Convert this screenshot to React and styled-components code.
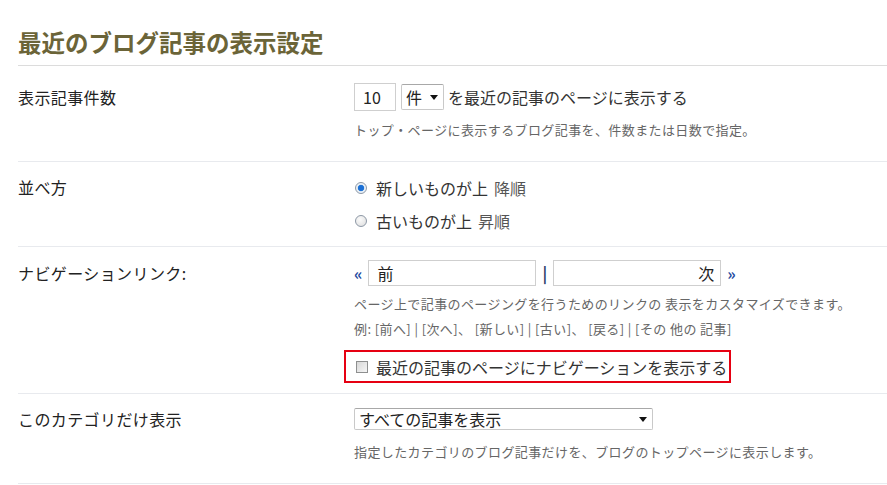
import styled, { createGlobalStyle } from 'styled-components'

const GlobalStyle = createGlobalStyle`
  html, body {
    margin: 0;
    padding: 0;
    background: #fff;
  }
  body {
    font-family: 'Noto Sans CJK JP', 'Noto Sans', sans-serif;
    color: #333;
  }
`

const Page = styled.div`
  padding: 27px 0 0 18px;
  width: 869px;
`

const Title = styled.h2`
  margin: 0;
  padding-bottom: 8px;
  font-size: 23.5px;
  line-height: 30px;
  font-weight: bold;
  color: #6b6438;
  border-bottom: 1px solid #dcdcdc;
`

const Row = styled.div`
  display: flex;
  padding: ${(p) => p.$pad};
  border-bottom: 1px solid #e8eaee;
`

const Label = styled.div`
  flex: 0 0 336px;
  font-size: 16px;
  line-height: ${(p) => p.$lh}px;
  color: #222;
  letter-spacing: 0.4px;
`

const Field = styled.div`
  flex: 1;
  display: flex;
  flex-direction: column;
  align-items: flex-start;
`

const Line = styled.div`
  display: flex;
  align-items: center;
  height: ${(p) => p.$h}px;
  margin-top: ${(p) => p.$mt || 0}px;
  font-size: 16px;
  color: #333;
`

const Hint = styled.div`
  font-size: 13px;
  letter-spacing: 0.4px;
  line-height: ${(p) => p.$lh || 20}px;
  margin-top: ${(p) => p.$mt || 0}px;
  color: #666;
  white-space: nowrap;
`

const TextBox = styled.div`
  box-sizing: border-box;
  width: ${(p) => p.$w}px;
  height: ${(p) => p.$h}px;
  border: 1px solid #cfcfcf;
  padding: 0 ${(p) => (p.$right ? 6 : 8)}px;
  display: flex;
  align-items: center;
  justify-content: ${(p) => (p.$right ? 'flex-end' : 'flex-start')};
  font-size: 16px;
  color: #222;
  background: #fff;
`

const Select = styled.div`
  position: relative;
  box-sizing: border-box;
  width: ${(p) => p.$w}px;
  height: ${(p) => p.$h}px;
  margin-left: ${(p) => p.$ml || 0}px;
  border: 1px solid #c9c9c9;
  border-top-color: #a8a8a8;
  border-radius: 2px;
  padding-left: 4px;
  display: flex;
  align-items: center;
  font-size: 16px;
  color: #222;
  background: #fff;
  &::after {
    content: '';
    position: absolute;
    right: 5px;
    top: 50%;
    margin-top: -2px;
    border-left: 4px solid transparent;
    border-right: 4px solid transparent;
    border-top: 5px solid #111;
  }
`

const After = styled.span`
  margin-left: 4px;
`

const Radio = styled.span`
  box-sizing: border-box;
  width: 12px;
  height: 12px;
  margin: 0 9px 0 1px;
  border-radius: 50%;
  border: 1px solid #8d98a6;
  background: ${(p) =>
    p.$checked
      ? 'radial-gradient(circle, #1a6fd6 0 2.5px, #3d89d9 3px, #e6eef6 3.6px, #f4f6f8 100%)'
      : 'radial-gradient(circle at 40% 35%, #fbfbfb 0, #dcdcdc 100%)'};
`

const Muted = styled.span`
  color: #555;
  margin-left: 6px;
`

const Guillemet = styled.span`
  color: #1f4ba0;
  font-weight: bold;
  font-size: 16px;
  margin: ${(p) => p.$m};
`

const Pipe = styled.span`
  color: #2a3a6a;
  font-weight: bold;
  margin: 0 6px 0 6px;
`

const HighlightBox = styled.div`
  box-sizing: border-box;
  width: 387px;
  height: 33px;
  margin: 9px 0 0 -10px;
  border: 2px solid #e60012;
  display: flex;
  align-items: center;
  padding-left: 10px;
  font-size: 16px;
  color: #333;
`

const Check = styled.span`
  box-sizing: border-box;
  width: 12px;
  height: 12px;
  margin-right: 8px;
  border: 1px solid #8e8f8f;
  background: linear-gradient(135deg, #d7d7d7 0%, #f5f5f5 100%);
`

export default function App() {
  return (
    <>
      <GlobalStyle />
      <Page>
        <Title>最近のブログ記事の表示設定</Title>

        <Row $pad='17px 0 21px'>
          <Label $lh={28}>表示記事件数</Label>
          <Field>
            <Line $h={28}>
              <TextBox $w={42} $h={28}>10</TextBox>
              <Select $w={43} $h={26} $ml={5}>件</Select>
              <After>を最近の記事のページに表示する</After>
            </Line>
            <Hint $mt={9}>トップ・ページに表示するブログ記事を、件数または日数で指定。</Hint>
          </Field>
        </Row>

        <Row $pad='9px 0 9px'>
          <Label $lh={33}>並べ方</Label>
          <Field>
            <Line $h={33}>
              <Radio $checked />
              新しいものが上<Muted>降順</Muted>
            </Line>
            <Line $h={33}>
              <Radio />
              古いものが上<Muted>昇順</Muted>
            </Line>
          </Field>
        </Row>

        <Row $pad='13px 0 10px'>
          <Label $lh={26}>ナビゲーションリンク:</Label>
          <Field>
            <Line $h={26}>
              <Guillemet $m='0 6px 0 0'>«</Guillemet>
              <TextBox $w={168} $h={26}>前</TextBox>
              <Pipe>|</Pipe>
              <TextBox $w={168} $h={26} $right>次</TextBox>
              <Guillemet $m='0 0 0 6px'>»</Guillemet>
            </Line>
            <Hint $lh={25} $mt={5}>
              ページ上で記事のページングを行うためのリンクの 表示をカスタマイズできます。
            </Hint>
            <Hint $lh={25}>
              例: [前へ] | [次へ]、 [新しい] | [古い]、 [戻る] | [その 他の 記事]
            </Hint>
            <HighlightBox>
              <Check />
              最近の記事のページにナビゲーションを表示する
            </HighlightBox>
          </Field>
        </Row>

        <Row $pad='14px 0 21px'>
          <Label $lh={22}>このカテゴリだけ表示</Label>
          <Field>
            <Line $h={22}>
              <Select $w={299} $h={22}>すべての記事を表示</Select>
            </Line>
            <Hint $mt={12}>指定したカテゴリのブログ記事だけを、ブログのトップページに表示します。</Hint>
          </Field>
        </Row>
      </Page>
    </>
  )
}
